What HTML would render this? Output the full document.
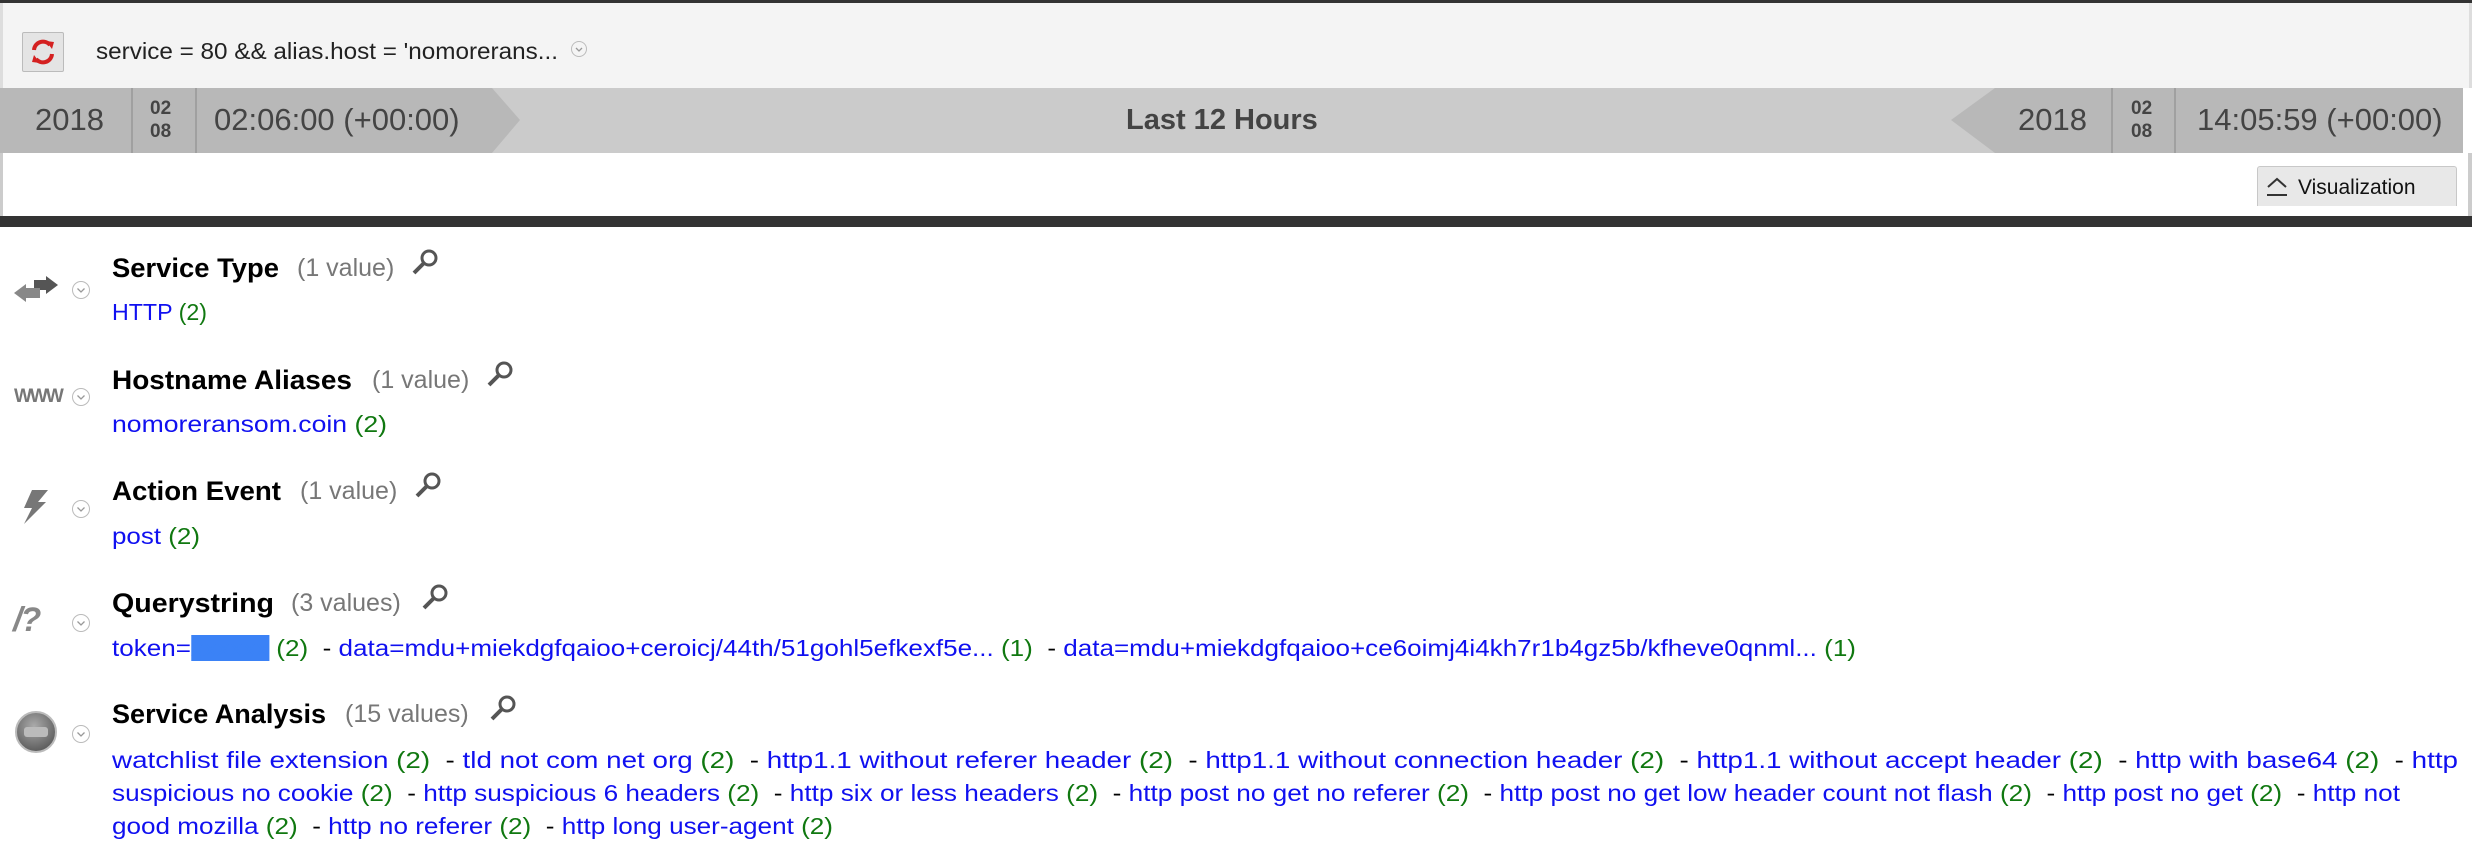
<!DOCTYPE html>
<html><head><meta charset="utf-8">
<style>
*{margin:0;padding:0;box-sizing:border-box}
body{width:2472px;height:864px;overflow:hidden;background:#fff;font-family:"Liberation Sans",sans-serif;position:relative}
.a{position:absolute;white-space:nowrap;line-height:1}
.fit{transform-origin:0 50%;display:inline-block}
.b{color:#1010f0}.g{color:#107810}.k{color:#777}
.t{font-weight:bold;font-size:27px;color:#000}
.v{font-size:23px}
</style></head><body>
<div class="a" style="left:0;top:0;width:2472px;height:3px;background:#333"></div>
<div class="a" style="left:0;top:3px;width:2472px;height:85px;background:#f4f4f4;border-left:3px solid #ddd;border-right:3px solid #ddd"></div>
<div class="a" style="left:22px;top:32px;width:42px;height:40px;background:#e4e4e4;border:1px solid #bbb;border-radius:2px"></div>
<svg class="a" style="left:28px;top:37px" width="30" height="30" viewBox="0 0 30 30"><path d="M6 13a9 9 0 0 1 16-5" fill="none" stroke="#d42020" stroke-width="4"/><path d="M24 17a9 9 0 0 1-16 5" fill="none" stroke="#d42020" stroke-width="4"/><path d="M18 4l8 1-2 7z" fill="#d42020"/><path d="M12 26l-8-1 2-7z" fill="#d42020"/></svg>
<div class="a fit" style="left:96px;top:40px;font-size:23px;color:#222" id="q">service = 80 &amp;&amp; alias.host = 'nomorerans...</div>
<svg class="a" style="left:570px;top:40px" width="18" height="18"><circle cx="9" cy="9" r="7.5" fill="none" stroke="#bbb"/><path d="M6 8l3 3 3-3" fill="none" stroke="#999" stroke-width="1.3"/></svg>
<div class="a" style="left:0;top:88px;width:2463px;height:65px;background:#cbcbcb"></div>
<svg class="a" style="left:0;top:88px" width="2463" height="65"><polygon points="0,0 492,0 520,32 492,65 0,65" fill="#b8b8b8"/><polygon points="2463,0 1995,0 1951,32 1995,65 2463,65" fill="#b8b8b8"/><rect x="131" y="0" width="2" height="65" fill="#a0a0a0"/><rect x="195" y="0" width="2" height="65" fill="#a0a0a0"/><rect x="2111" y="0" width="2" height="65" fill="#a0a0a0"/><rect x="2174" y="0" width="2" height="65" fill="#a0a0a0"/></svg>
<div class="a" style="left:35px;top:104px;font-size:31px;color:#444">2018</div>
<div class="a" style="left:150px;top:97px;font-size:19px;font-weight:bold;color:#444;line-height:23px">02<br>08</div>
<div class="a" style="left:214px;top:104px;font-size:31px;color:#444">02:06:00 (+00:00)</div>
<div class="a" style="left:1126px;top:106px;font-size:29px;font-weight:bold;color:#444">Last 12 Hours</div>
<div class="a" style="left:2018px;top:104px;font-size:31px;color:#444">2018</div>
<div class="a" style="left:2131px;top:97px;font-size:19px;font-weight:bold;color:#444;line-height:23px">02<br>08</div>
<div class="a" style="left:2197px;top:104px;font-size:31px;color:#444">14:05:59 (+00:00)</div>
<div class="a" style="left:0;top:153px;width:3px;height:63px;background:#ccc"></div>
<div class="a" style="left:2468px;top:153px;width:4px;height:63px;background:#ccc"></div>
<div class="a" style="left:2257px;top:166px;width:200px;height:40px;background:#e8e8e8;border:1px solid #c8c8c8;border-bottom:none;border-radius:3px 3px 0 0"></div>
<svg class="a" style="left:2264px;top:174px" width="26" height="26"><path d="M4 13l9-8 9 8" fill="none" stroke="#333" stroke-width="2"/><path d="M3 21h20" stroke="#333" stroke-width="2"/></svg>
<div class="a" style="left:2298px;top:177px;font-size:21px;color:#111">Visualization</div>
<div class="a" style="left:0;top:216px;width:2472px;height:11px;background:#333"></div>

<svg class="a" style="left:14px;top:276px" width="46" height="30"><path d="M20 4h12v-4l12 9-12 9v-4h-12z" fill="#555"/><path d="M26 12h-14v-4l-12 9 12 9v-4h14z" fill="#888"/></svg>
<div class="a" style="left:14px;top:387px;font-size:19px;font-weight:bold;color:#777;letter-spacing:-2px">WWW</div>
<svg class="a" style="left:18px;top:488px" width="34" height="38"><path d="M14 2h16l-10 12h8l-22 22 8-16h-8z" fill="#777"/></svg>
<div class="a" style="left:13px;top:603px;font-size:34px;font-weight:bold;font-style:italic;color:#888;letter-spacing:-2px">/?</div>
<svg class="a" style="left:14px;top:710px" width="44" height="44"><defs><radialGradient id="rg" cx=".45" cy=".35" r=".7"><stop offset="0" stop-color="#aaa"/><stop offset="1" stop-color="#555"/></radialGradient></defs><circle cx="22" cy="22" r="20" fill="url(#rg)" stroke="#bbb" stroke-width="2"/><rect x="10" y="17" width="24" height="10" rx="3" fill="#bbb"/></svg>
<svg class="a" style="left:71px;top:280px" width="20" height="20"><circle cx="10" cy="10" r="8.5" fill="none" stroke="#bbb"/><path d="M6.5 8.5l3.5 3.5 3.5-3.5" fill="none" stroke="#999" stroke-width="1.3"/></svg>
<svg class="a" style="left:71px;top:387px" width="20" height="20"><circle cx="10" cy="10" r="8.5" fill="none" stroke="#bbb"/><path d="M6.5 8.5l3.5 3.5 3.5-3.5" fill="none" stroke="#999" stroke-width="1.3"/></svg>
<svg class="a" style="left:71px;top:499px" width="20" height="20"><circle cx="10" cy="10" r="8.5" fill="none" stroke="#bbb"/><path d="M6.5 8.5l3.5 3.5 3.5-3.5" fill="none" stroke="#999" stroke-width="1.3"/></svg>
<svg class="a" style="left:71px;top:613px" width="20" height="20"><circle cx="10" cy="10" r="8.5" fill="none" stroke="#bbb"/><path d="M6.5 8.5l3.5 3.5 3.5-3.5" fill="none" stroke="#999" stroke-width="1.3"/></svg>
<svg class="a" style="left:71px;top:724px" width="20" height="20"><circle cx="10" cy="10" r="8.5" fill="none" stroke="#bbb"/><path d="M6.5 8.5l3.5 3.5 3.5-3.5" fill="none" stroke="#999" stroke-width="1.3"/></svg>

<div class="a t fit" style="left:112px;top:255px" data-w="167">Service Type</div>
<div class="a v k" style="left:297px;top:256px;font-size:25px">(1 value)</div>
<div class="a t fit" style="left:112px;top:367px" data-w="240">Hostname Aliases</div>
<div class="a v k" style="left:372px;top:368px;font-size:25px">(1 value)</div>
<div class="a t fit" style="left:112px;top:478px" data-w="169">Action Event</div>
<div class="a v k" style="left:300px;top:479px;font-size:25px">(1 value)</div>
<div class="a t fit" style="left:112px;top:590px" data-w="162">Querystring</div>
<div class="a v k" style="left:291px;top:591px;font-size:25px">(3 values)</div>
<div class="a t fit" style="left:112px;top:701px" data-w="214">Service Analysis</div>
<div class="a v k" style="left:345px;top:702px;font-size:25px">(15 values)</div>
<svg class="a" style="left:410px;top:248px" width="30" height="30"><circle cx="19" cy="10" r="7" fill="none" stroke="#555" stroke-width="3"/><path d="M14 15l-10 10" stroke="#555" stroke-width="4"/></svg>
<svg class="a" style="left:485px;top:360px" width="30" height="30"><circle cx="19" cy="10" r="7" fill="none" stroke="#555" stroke-width="3"/><path d="M14 15l-10 10" stroke="#555" stroke-width="4"/></svg>
<svg class="a" style="left:413px;top:471px" width="30" height="30"><circle cx="19" cy="10" r="7" fill="none" stroke="#555" stroke-width="3"/><path d="M14 15l-10 10" stroke="#555" stroke-width="4"/></svg>
<svg class="a" style="left:420px;top:583px" width="30" height="30"><circle cx="19" cy="10" r="7" fill="none" stroke="#555" stroke-width="3"/><path d="M14 15l-10 10" stroke="#555" stroke-width="4"/></svg>
<svg class="a" style="left:488px;top:694px" width="30" height="30"><circle cx="19" cy="10" r="7" fill="none" stroke="#555" stroke-width="3"/><path d="M14 15l-10 10" stroke="#555" stroke-width="4"/></svg>

<div class="a v fit" style="left:112px;top:301px" data-w="95"><span class="b">HTTP</span> <span class="g">(2)</span></div>
<div class="a v fit" style="left:112px;top:413px" data-w="275"><span class="b">nomoreransom.coin</span> <span class="g">(2)</span></div>
<div class="a v fit" style="left:112px;top:525px" data-w="88"><span class="b">post</span> <span class="g">(2)</span></div>
<div class="a v fit" style="left:112px;top:637px" data-w="1744"><span class="b">token=<span style="background:#3b82f6;color:#3b82f6">xxxxxx</span></span> <span class="g">(2)</span>&nbsp; - <span class="b">data=mdu+miekdgfqaioo+ceroicj/44th/51gohl5efkexf5e...</span> <span class="g">(1)</span>&nbsp; - <span class="b">data=mdu+miekdgfqaioo+ce6oimj4i4kh7r1b4gz5b/kfheve0qnml...</span> <span class="g">(1)</span></div>
<div class="a v fit" style="left:112px;top:749px" data-w="2346"><span class="b">watchlist file extension</span> <span class="g">(2)</span>&nbsp; - <span class="b">tld not com net org</span> <span class="g">(2)</span>&nbsp; - <span class="b">http1.1 without referer header</span> <span class="g">(2)</span>&nbsp; - <span class="b">http1.1 without connection header</span> <span class="g">(2)</span>&nbsp; - <span class="b">http1.1 without accept header</span> <span class="g">(2)</span>&nbsp; - <span class="b">http with base64</span> <span class="g">(2)</span>&nbsp; - <span class="b">http</span></div>
<div class="a v fit" style="left:112px;top:782px" data-w="2288"><span class="b">suspicious no cookie</span> <span class="g">(2)</span>&nbsp; - <span class="b">http suspicious 6 headers</span> <span class="g">(2)</span>&nbsp; - <span class="b">http six or less headers</span> <span class="g">(2)</span>&nbsp; - <span class="b">http post no get no referer</span> <span class="g">(2)</span>&nbsp; - <span class="b">http post no get low header count not flash</span> <span class="g">(2)</span>&nbsp; - <span class="b">http post no get</span> <span class="g">(2)</span>&nbsp; - <span class="b">http not</span></div>
<div class="a v fit" style="left:112px;top:815px" data-w="721"><span class="b">good mozilla</span> <span class="g">(2)</span>&nbsp; - <span class="b">http no referer</span> <span class="g">(2)</span>&nbsp; - <span class="b">http long user-agent</span> <span class="g">(2)</span></div>
<script>
document.getElementById('q').setAttribute('data-w','462');
document.querySelectorAll('.fit').forEach(function(e){var w=parseFloat(e.getAttribute('data-w'));if(!w)return;var r=e.getBoundingClientRect().width;if(r>0)e.style.transform='scaleX('+(w/r)+')';});
</script>
</body></html>
